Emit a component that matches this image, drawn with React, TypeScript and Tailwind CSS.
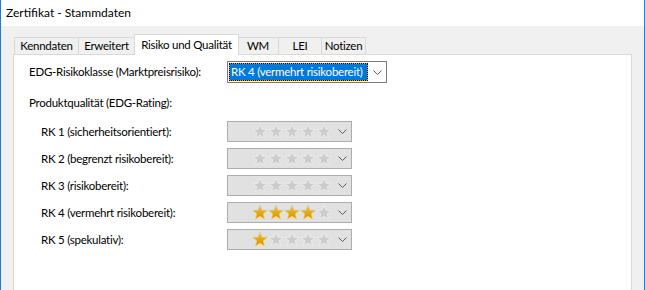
const TABS = [
  { label: 'Kenndaten', w: 'w-[65px]' },
  { label: 'Erweitert', w: 'w-[56px]' },
  { label: 'Risiko und Qualität', w: 'w-[105px]', active: true },
  { label: 'WM', w: 'w-[41px]' },
  { label: 'LEI', w: 'w-[43px]' },
  { label: 'Notizen', w: 'w-[44px]' },
];

const RATINGS = [
  { label: 'RK 1 (sicherheitsorientiert):', stars: 0 },
  { label: 'RK 2 (begrenzt risikobereit):', stars: 0 },
  { label: 'RK 3 (risikobereit):', stars: 0 },
  { label: 'RK 4 (vermehrt risikobereit):', stars: 4 },
  { label: 'RK 5 (spekulativ):', stars: 1 },
];

const STAR_POINTS =
  '8,0.2 9.94,5.13 15.23,5.45 11.14,8.82 12.47,13.95 8,11.1 3.53,13.95 4.86,8.82 0.77,5.45 6.06,5.13';

function Chevron() {
  return (
    <svg width="9" height="5" viewBox="0 0 9 5" className="shrink-0">
      <path d="M0.5 0.5 L4.5 4.5 L8.5 0.5" fill="none" stroke="#5a5a5a" strokeWidth="1" />
    </svg>
  );
}

function Star({ filled, id }: { filled: boolean; id: string }) {
  return (
    <svg width="16" height="15" viewBox="0 0 16 15" className="shrink-0">
      {filled && (
        <defs>
          <linearGradient id={id} x1="0" y1="0" x2="0" y2="1">
            <stop offset="0" stopColor="#f5c430" />
            <stop offset="1" stopColor="#d08f00" />
          </linearGradient>
        </defs>
      )}
      <polygon
        points={STAR_POINTS}
        fill={filled ? `url(#${id})` : '#cccccc'}
        stroke={filled ? '#ecc860' : '#f2f2f2'}
        strokeWidth="0.7"
        strokeLinejoin="round"
      />
    </svg>
  );
}

function StarSelect({ count, row }: { count: number; row: number }) {
  return (
    <div className="flex h-[21px] w-[125px] items-center justify-end border border-[#adadad] bg-[#e1e1e1] pr-[4px]">
      <div className="flex items-center">
        {[0, 1, 2, 3, 4].map((i) => (
          <Star key={i} filled={i < count} id={`gold-${row}-${i}`} />
        ))}
      </div>
      <div className="ml-[6px]">
        <Chevron />
      </div>
    </div>
  );
}

export default function App() {
  return (
    <div className="flex h-[290px] w-[645px] flex-col overflow-hidden border-x border-[#1a7fd4] bg-white font-[Lato,'Liberation_Sans',sans-serif] text-[11.5px] leading-none tracking-[-0.25px] text-black">
      <div className="flex h-[26px] shrink-0 items-center bg-white pl-[5px] text-[12px] tracking-normal">
        Zertifikat - Stammdaten
      </div>

      <div className="flex flex-1 flex-col bg-[#f0f0f0] px-[12px] pt-[8px]">
        <div className="flex h-[20px] items-end pl-px">
          {TABS.map((tab, i) =>
            tab.active ? (
              <div
                key={tab.label}
                className={`relative z-10 -mb-px -ml-px flex h-[21px] items-center justify-center whitespace-nowrap border-x border-t border-[#d9d9d9] bg-white ${tab.w}`}
              >
                {tab.label}
              </div>
            ) : (
              <div
                key={tab.label}
                className={`flex h-[17px] items-center justify-center whitespace-nowrap border-t border-r border-[#d9d9d9] bg-[#f0f0f0] ${
                  i === 0 ? 'border-l' : ''
                } ${TABS[i - 1]?.active ? '-ml-px' : ''} ${tab.w}`}
              >
                {tab.label}
              </div>
            ),
          )}
        </div>

        <div className="flex-1 border-x border-t border-[#d9d9d9] bg-white pl-[15px] pt-[6px]">
          <div className="flex h-[22px] items-center">
            <div className="w-[198px] whitespace-nowrap">EDG-Risikoklasse (Marktpreisrisiko):</div>
            <div className="flex h-[22px] w-[160px] items-center border border-[#7a7a7a] bg-white pr-[4px]">
              <div className="ml-px h-[18px] w-[139px] border border-dotted border-black bg-[#f5a300]">
                <div className="flex h-full items-center whitespace-nowrap bg-[#0078d7] pl-[1px] text-white">
                  RK 4 (vermehrt risikobereit)
                </div>
              </div>
              <div className="ml-auto">
                <Chevron />
              </div>
            </div>
          </div>

          <div className="mt-[12px] flex h-[16px] items-center">Produktqualität (EDG-Rating):</div>

          <div className="mt-[10px] flex flex-col gap-[6px] pl-[12px]">
            {RATINGS.map((r, row) => (
              <div key={r.label} className="flex items-center">
                <div className="w-[186px] whitespace-nowrap">{r.label}</div>
                <StarSelect count={r.stars} row={row} />
              </div>
            ))}
          </div>
        </div>
      </div>
    </div>
  );
}
